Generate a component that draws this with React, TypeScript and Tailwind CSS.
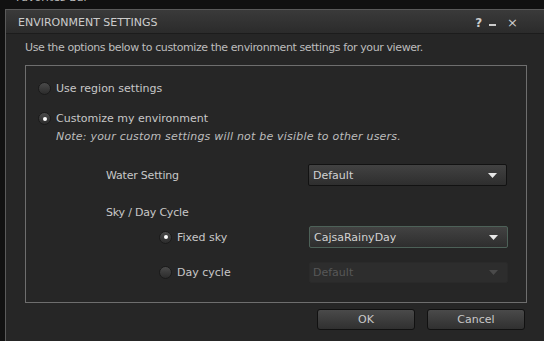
import React from "react";

function Radio({ checked }: { checked?: boolean }) {
  return (
    <span className="w-[13px] h-[13px] rounded-full border border-[#1a1a1a] bg-gradient-to-b from-[#4a4a4a] to-[#2c2c2c] flex items-center justify-center shrink-0">
      {checked && <span className="w-[4px] h-[4px] rounded-full bg-white" />}
    </span>
  );
}

function Arrow({ dim }: { dim?: boolean }) {
  return (
    <svg width="9" height="5" viewBox="0 0 9 5">
      <path d="M0 0h9L4.5 5z" fill={dim ? "#4a4a4a" : "#e8e8e8"} />
    </svg>
  );
}

function Combo({ label, focus, disabled }: { label: string; focus?: boolean; disabled?: boolean }) {
  if (disabled) {
    return (
      <div className="w-[199px] h-[21px] rounded-[2px] bg-[#2d2d2d] border border-[#2a2a2a] flex items-center justify-between pl-[3px] pr-[9px] text-[#585858]">
        <span>{label}</span>
        <Arrow dim />
      </div>
    );
  }
  return (
    <div
      className={
        focus
          ? "w-[199px] h-[22px] rounded-[2px] bg-gradient-to-b from-[#424242] to-[#2e2e2e] border border-[#4d6158] flex items-center justify-between pl-[4px] pr-[9px] text-[#d2d2d2]"
          : "w-[199px] h-[22px] rounded-[2px] bg-gradient-to-b from-[#424242] to-[#2e2e2e] border border-[#121212] flex items-center justify-between pl-[4px] pr-[9px] text-[#d2d2d2]"
      }
    >
      <span>{label}</span>
      <Arrow />
    </div>
  );
}

export default function App() {
  return (
    <div className="w-[544px] h-[341px] bg-[#111111] flex flex-col overflow-hidden text-[11px] leading-none font-['DejaVu_Sans',sans-serif]">
      <div className="h-[9px] overflow-hidden pl-[16px] text-[#bbbbbb]">
        <div className="-mt-[8px] text-[11px] leading-[12px]">Favorites Bar</div>
      </div>
      <div className="flex-1 ml-[5px] bg-[#262626] border-l border-t border-[#5a5a5a] flex flex-col">
        <div className="h-[24px] bg-gradient-to-b from-[#3a3a3a] to-[#2b2b2b] border-b border-[#1c1c1c] flex items-center pl-[12px] pr-[10px] pt-[2px] text-[#cccccc]">
          <span className="text-[11px] flex-1">ENVIRONMENT SETTINGS</span>
          <span className="font-bold text-[12px] mr-[7px]">?</span>
          <span className="w-[7px] h-[2px] bg-[#cccccc] mt-[5px] mr-[11px]" />
          <span className="text-[13px] mr-[16px]">×</span>
        </div>
        <div className="pl-[19px] pt-[8px] text-[#bdbdbd] tracking-[-0.4px]">
          Use the options below to customize the environment settings for your viewer.
        </div>
        <div className="ml-[19px] mt-[12px] w-[502px] h-[238px] border border-[#6e6e6e] flex flex-col text-[#c8c8c8]">
          <div className="flex items-center gap-[5px] pl-[12px] pt-[16px]">
            <Radio />
            <span>Use region settings</span>
          </div>
          <div className="flex items-center gap-[5px] pl-[12px] pt-[17px]">
            <Radio checked />
            <span>Customize my environment</span>
          </div>
          <div className="pl-[30px] pt-[6px] italic text-[#bdbdbd] tracking-[0.2px]">
            Note: your custom settings will not be visible to other users.
          </div>
          <div className="flex items-center pl-[80px] pt-[22px]">
            <span className="w-[202px] tracking-[-0.2px]">Water Setting</span>
            <Combo label="Default" />
          </div>
          <div className="pl-[80px] pt-[21px] tracking-[-0.2px]">Sky / Day Cycle</div>
          <div className="flex items-center pl-[133px] pt-[8px]">
            <Radio checked />
            <span className="ml-[5px] w-[132px]">Fixed sky</span>
            <Combo label="CajsaRainyDay" focus />
          </div>
          <div className="flex items-center pl-[133px] pt-[14px]">
            <Radio />
            <span className="ml-[5px] w-[132px]">Day cycle</span>
            <Combo label="Default" disabled />
          </div>
        </div>
        <div className="flex justify-end gap-[12px] pr-[19px] pt-[6px] text-[#c8c8c8]">
          <button className="w-[98px] h-[21px] rounded-[3px] border border-[#111111] bg-gradient-to-b from-[#4a4a4a] to-[#303030]">OK</button>
          <button className="w-[98px] h-[21px] rounded-[3px] border border-[#111111] bg-gradient-to-b from-[#4a4a4a] to-[#303030]">Cancel</button>
        </div>
      </div>
    </div>
  );
}
